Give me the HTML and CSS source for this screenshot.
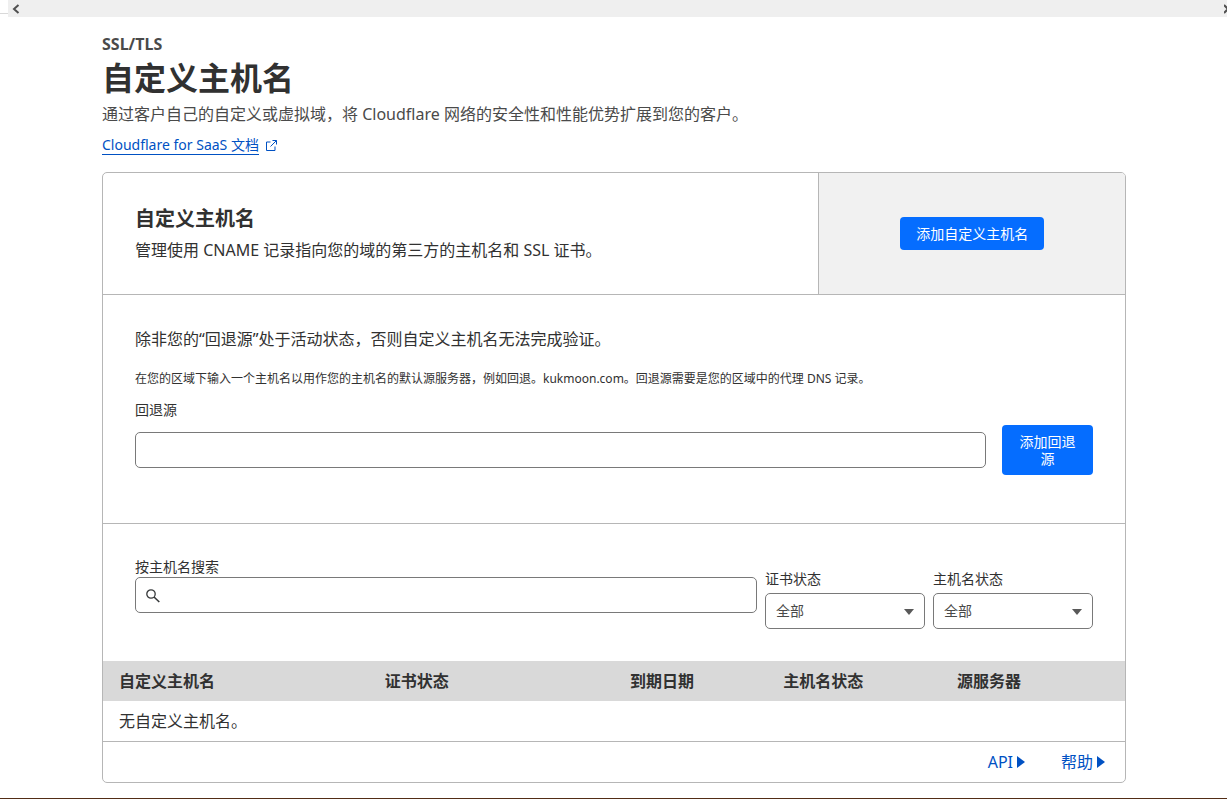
FILE: index.html
```html
<!DOCTYPE html>
<html lang="zh-CN">
<head>
<meta charset="utf-8">
<title>自定义主机名</title>
<link rel="stylesheet" href="styles.css">
</head>
<body>
<div class="scrollbar">
  <span class="scroll-corner"></span>
  <div class="scroll-track">
    <button class="scroll-btn" type="button" aria-label="向左滚动"><svg width="8" height="10" viewBox="0 0 8 10"><path d="M6.500 1L2 5l4.500 4" fill="none" stroke="#505050" stroke-width="2"/></svg></button>
    <button class="scroll-btn" type="button" aria-label="向右滚动"><svg width="3" height="10" viewBox="0 0 3 10"><path d="M0 1l4 4-4 4" fill="none" stroke="#505050" stroke-width="2"/></svg></button>
  </div>
</div>
<main class="page">
  <header class="intro">
    <p class="eyebrow">SSL/TLS</p>
    <h1 class="title">自定义主机名</h1>
    <p class="summary">通过客户自己的自定义或虚拟域，将 Cloudflare 网络的安全性和性能优势扩展到您的客户。</p>
    <a class="doc-link" href="#docs"><span class="doc-text">Cloudflare for SaaS 文档</span><svg width="11" height="11" viewBox="0 0 11 11" fill="none" stroke="currentColor"><path d="M4.500 2H.5v8.500H9V6.500M6.500.5h4v4M10.500.5L4.500 6.500"/></svg></a>
  </header>
  <section class="card">
    <div class="card-head">
      <div class="card-info">
        <h2 class="card-title">自定义主机名</h2>
        <p class="card-text">管理使用 CNAME 记录指向您的域的第三方的主机名和 SSL 证书。</p>
      </div>
      <div class="card-action"><button class="btn" type="button">添加自定义主机名</button></div>
    </div>
    <form class="fallback">
      <p class="card-text">除非您的“回退源”处于活动状态，否则自定义主机名无法完成验证。</p>
      <p class="hint">在您的区域下输入一个主机名以用作您的主机名的默认源服务器，例如回退。kukmoon.com。回退源需要是您的区域中的代理 DNS 记录。</p>
      <label class="label" for="origin">回退源</label>
      <div class="origin-row">
        <input class="field" id="origin" type="text">
        <button class="btn btn-wrap" type="button">添加回退源</button>
      </div>
    </form>
    <form class="filters">
      <div class="search">
        <label class="label" for="search">按主机名搜索</label>
        <div class="control">
          <input class="field search-field" id="search" type="text">
          <svg class="search-icon" width="14" height="14" viewBox="0 0 14 14" fill="none" stroke="#36393a"><circle cx="5" cy="5" r="4.200" stroke-width="1.300"/><path d="M8 8l5.300 5" stroke-width="1.600"/></svg>
        </div>
      </div>
      <div class="filter">
        <label class="label" for="cert">证书状态</label>
        <div class="control">
          <select class="field select" id="cert"><option>全部</option></select>
          <svg class="caret" width="10" height="6" viewBox="0 0 10 6"><path d="M0 0h10L5 6z" fill="#595959"/></svg>
        </div>
      </div>
      <div class="filter">
        <label class="label" for="host">主机名状态</label>
        <div class="control">
          <select class="field select" id="host"><option>全部</option></select>
          <svg class="caret" width="10" height="6" viewBox="0 0 10 6"><path d="M0 0h10L5 6z" fill="#595959"/></svg>
        </div>
      </div>
    </form>
    <table class="table">
      <colgroup><col class="col-name"><col class="col-cert"><col class="col-date"><col class="col-host"><col></colgroup>
      <thead><tr><th>自定义主机名</th><th>证书状态</th><th>到期日期</th><th>主机名状态</th><th>源服务器</th></tr></thead>
      <tbody><tr><td colspan="5">无自定义主机名。</td></tr></tbody>
    </table>
    <footer class="card-foot">
      <a class="foot-link" href="#api">API<svg width="8" height="12" viewBox="0 0 8 12"><path d="M0 0l8 6-8 6z" fill="currentColor"/></svg></a>
      <a class="foot-link" href="#help">帮助<svg width="8" height="12" viewBox="0 0 8 12"><path d="M0 0l8 6-8 6z" fill="currentColor"/></svg></a>
    </footer>
  </section>
</main>
</body>
</html>
```
FILE: styles.css
```css
* { box-sizing: border-box; }
body {
  margin: 0;
  min-height: 100vh;
  display: flex;
  flex-direction: column;
  background: #fff;
  color: #313131;
  border-bottom: 1px solid #522d16;
  font: 16px/24px "Noto Sans", "Noto Sans CJK SC", sans-serif;
}
h1, h2, p { margin: 0; }
button, input, select { font: inherit; color: inherit; }
svg { flex: none; }

.scrollbar { display: flex; height: 17px; }
.scroll-corner { width: 8px; height: 14px; border-bottom: 1px solid #d9d9d9; }
.scroll-track {
  flex: 1;
  display: flex;
  justify-content: space-between;
  align-items: center;
  padding-left: 4px;
  background: #efefef;
}
.scroll-btn { display: flex; padding: 0; border: 0; background: none; }

.page {
  width: 100%;
  max-width: 1025px;
  margin: 0 auto;
  padding: 15px 0 15px 1px;
}
.intro { display: flex; flex-direction: column; align-items: flex-start; margin-bottom: 17px; }
.eyebrow { font-weight: 700; color: #4a4a4a; }
.title { margin-bottom: 2px; font-size: 32px; line-height: 44px; font-weight: 700; }
.summary { margin-bottom: 9px; color: #4a4a4a; }
.doc-link {
  display: flex;
  align-items: center;
  gap: 7px;
  color: #0051c3;
  font-size: 14px;
  line-height: 19px;
  text-decoration: none;
}
.doc-text { border-bottom: 1px solid #0051c3; }

.card { border: 1px solid #b6b6b6; border-radius: 5px; overflow: hidden; }
.card-head { display: flex; border-bottom: 1px solid #b6b6b6; }
.card-info { width: 70%; padding: 32px; }
.card-title { margin-bottom: 6px; font-size: 20px; line-height: 27px; font-weight: 700; }
.card-action {
  width: 30%;
  display: flex;
  align-items: center;
  justify-content: center;
  border-left: 1px solid #b6b6b6;
  background: #f1f1f1;
}
.btn {
  padding: 8px 16px;
  border: 0;
  border-radius: 4px;
  background: #056dff;
  color: #fff;
  font-size: 14px;
  line-height: 17px;
}
.btn-wrap { flex: none; width: 91px; }

.fallback { padding: 32px 32px 48px; border-bottom: 1px solid #b6b6b6; }
.hint { margin: 16px 0 8px; font-size: 12px; line-height: 24px; }
.label { display: block; font-size: 14px; line-height: 21px; }
.origin-row { display: flex; align-items: center; gap: 16px; margin-top: 5px; }
.field {
  display: block;
  width: 100%;
  min-width: 0;
  height: 36px;
  padding: 0 10px;
  border: 1px solid #797979;
  border-radius: 5px;
  background: #fff;
  font-size: 14px;
}

.filters { display: flex; align-items: flex-end; gap: 8px; padding: 32px; }
.search { flex: 1; margin-bottom: 16px; }
.filter { width: 160px; }
.filter .label { margin-bottom: 4px; }
.control { position: relative; }
.search-field { padding-left: 32px; }
.search-icon { position: absolute; left: 11px; top: 12px; }
.select { appearance: none; color: #4a4a4a; }
.caret { position: absolute; right: 11px; top: 16px; pointer-events: none; }

.table { width: 100%; table-layout: fixed; border-collapse: collapse; text-align: left; }
.table th, .table td { padding: 8px 16px; }
.table th { background: #d9d9d9; font-weight: 700; }
.col-name { width: 26%; }
.col-cert { width: 24%; }
.col-date { width: 15%; }
.col-host { width: 17%; }
.card-foot {
  display: flex;
  justify-content: flex-end;
  gap: 36px;
  padding: 8px 20px;
  border-top: 1px solid #b6b6b6;
}
.foot-link { display: flex; align-items: center; gap: 4px; color: #0051c3; text-decoration: none; }
```
